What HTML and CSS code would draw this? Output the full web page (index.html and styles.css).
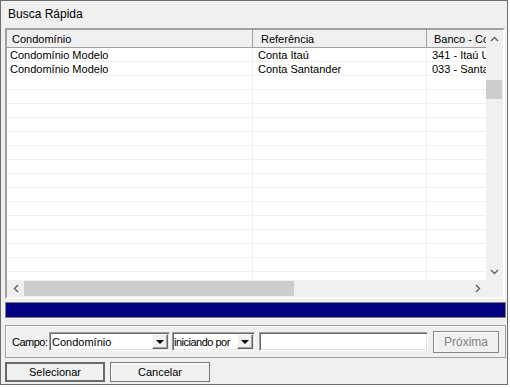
FILE: index.html
```html
<!DOCTYPE html>
<html lang="pt-BR">
<head>
    <meta charset="UTF-8">
    <title>Busca Rápida</title>
    <link rel="stylesheet" href="styles.css">
</head>
<body>
    <div class="dialog">
        <div class="title">Busca Rápida</div>

        <div class="grid">
            <div class="grid-main">
                <div class="grid-body">
                    <div class="head-row">
                        <div class="hcell c1">Condomínio</div>
                        <div class="hcell c2">Referência</div>
                        <div class="hcell c3">Banco - Conta</div>
                    </div>
                    <div class="row">
                        <div class="cell c1">Condomínio Modelo</div>
                        <div class="cell c2">Conta Itaú</div>
                        <div class="cell c3">341 - Itaú Unibanco</div>
                    </div>
                    <div class="row">
                        <div class="cell c1">Condomínio Modelo</div>
                        <div class="cell c2">Conta Santander</div>
                        <div class="cell c3">033 - Santander</div>
                    </div>
                    <div class="row"><div class="cell c1"></div><div class="cell c2"></div><div class="cell c3"></div></div>
                    <div class="row"><div class="cell c1"></div><div class="cell c2"></div><div class="cell c3"></div></div>
                    <div class="row"><div class="cell c1"></div><div class="cell c2"></div><div class="cell c3"></div></div>
                    <div class="row"><div class="cell c1"></div><div class="cell c2"></div><div class="cell c3"></div></div>
                    <div class="row"><div class="cell c1"></div><div class="cell c2"></div><div class="cell c3"></div></div>
                    <div class="row"><div class="cell c1"></div><div class="cell c2"></div><div class="cell c3"></div></div>
                    <div class="row"><div class="cell c1"></div><div class="cell c2"></div><div class="cell c3"></div></div>
                    <div class="row"><div class="cell c1"></div><div class="cell c2"></div><div class="cell c3"></div></div>
                    <div class="row"><div class="cell c1"></div><div class="cell c2"></div><div class="cell c3"></div></div>
                    <div class="row"><div class="cell c1"></div><div class="cell c2"></div><div class="cell c3"></div></div>
                    <div class="row"><div class="cell c1"></div><div class="cell c2"></div><div class="cell c3"></div></div>
                    <div class="row"><div class="cell c1"></div><div class="cell c2"></div><div class="cell c3"></div></div>
                    <div class="row"><div class="cell c1"></div><div class="cell c2"></div><div class="cell c3"></div></div>
                    <div class="row"><div class="cell c1"></div><div class="cell c2"></div><div class="cell c3"></div></div>
                    <div class="row"><div class="cell c1"></div><div class="cell c2"></div><div class="cell c3"></div></div>
                </div>
                <div class="vscroll">
                    <div class="arrow-v">
                        <svg width="9" height="6" viewBox="0 0 9 6"><polyline points="1,5 4.5,1.5 8,5" fill="none" stroke="#606060" stroke-width="1.4"/></svg>
                    </div>
                    <div class="vthumb"></div>
                    <div class="vtrack"></div>
                    <div class="arrow-v">
                        <svg width="9" height="6" viewBox="0 0 9 6"><polyline points="1,1 4.5,4.5 8,1" fill="none" stroke="#606060" stroke-width="1.4"/></svg>
                    </div>
                </div>
            </div>
            <div class="hscroll-row">
                <div class="hscroll">
                    <div class="arrow-h">
                        <svg width="6" height="9" viewBox="0 0 6 9"><polyline points="5,1 1.5,4.5 5,8" fill="none" stroke="#606060" stroke-width="1.4"/></svg>
                    </div>
                    <div class="hthumb"></div>
                    <div class="htrack"></div>
                    <div class="arrow-h">
                        <svg width="6" height="9" viewBox="0 0 6 9"><polyline points="1,1 4.5,4.5 1,8" fill="none" stroke="#606060" stroke-width="1.4"/></svg>
                    </div>
                </div>
                <div class="corner"></div>
            </div>
        </div>

        <div class="progress"></div>

        <div class="search">
            <span class="label">Campo:</span>
            <div class="combo combo-field">
                <span class="combo-text">Condomínio</span>
                <span class="drop"><span class="tri"></span></span>
            </div>
            <div class="combo combo-mode">
                <span class="combo-text">iniciando por</span>
                <span class="drop"><span class="tri"></span></span>
            </div>
            <div class="text-input"></div>
            <button class="btn btn-next" disabled>Próxima</button>
        </div>

        <div class="actions">
            <button class="btn btn-default">Selecionar</button>
            <button class="btn">Cancelar</button>
        </div>
    </div>
</body>
</html>
```

FILE: styles.css
```css
body {
    margin: 0;
    background: #fff;
    font-family: "Liberation Sans", Arial, sans-serif;
    font-size: 11px;
    color: #000;
}
.dialog {
    width: 506px;
    height: 383px;
    border: 1px solid #6d6d6d;
    background: #f0f0f0;
    display: flex;
    flex-direction: column;
}
.title {
    height: 27px;
    padding-left: 7px;
    font-size: 12px;
    line-height: 26px;
}

/* grid */
.grid {
    margin-left: 4px;
    width: 496px;
    border: 2px solid;
    border-color: #a0a0a0 #fff #fff #a0a0a0;
    box-shadow: inset 1px 1px #696969;
    display: flex;
    flex-direction: column;
}
.grid-main {
    display: flex;
    height: 250px;
}
.grid-body {
    width: 479px;
    height: 250px;
    overflow: hidden;
    background: #fff;
}
.head-row {
    display: flex;
    height: 17px;
    border-bottom: 1px solid #a0a0a0;
    background: #f0f0f0;
}
.hcell {
    box-sizing: border-box;
    height: 17px;
    line-height: 18px;
    border-right: 1px solid #a0a0a0;
    white-space: nowrap;
    overflow-x: clip;
}
.row {
    display: flex;
    height: 13px;
    border-bottom: 1px solid #f0f0f0;
}
.cell {
    box-sizing: border-box;
    height: 13px;
    line-height: 15px;
    border-right: 1px solid #f0f0f0;
    white-space: nowrap;
    overflow-x: clip;
}
.c1 { flex: none; width: 246px; }
.c2 { flex: none; width: 174px; }
.c3 { flex: 1; min-width: 0; border-right: none; }
.hcell.c1 { padding-left: 5px; }
.hcell.c2 { padding-left: 8px; }
.hcell.c3 { padding-left: 7px; }
.cell.c1 { padding-left: 3px; }
.cell.c2 { padding-left: 5px; }
.cell.c3 { padding-left: 5px; }

.vscroll {
    width: 17px;
    display: flex;
    flex-direction: column;
    background: #f0f0f0;
}
.arrow-v {
    height: 17px;
    display: flex;
    align-items: center;
    justify-content: center;
}
.vthumb {
    margin: 33px 1px 0 0;
    height: 19px;
    background: #cdcdcd;
}
.vtrack { flex: 1; }
.hscroll-row {
    display: flex;
    height: 17px;
}
.hscroll {
    width: 479px;
    display: flex;
    align-items: center;
    background: #f0f0f0;
}
.arrow-h {
    width: 17px;
    height: 17px;
    display: flex;
    align-items: center;
    justify-content: center;
}
.hthumb {
    width: 270px;
    height: 15px;
    background: #cdcdcd;
}
.htrack { flex: 1; }
.corner {
    flex: 1;
    background: #f0f0f0;
}

.progress {
    margin: 3px 0 0 4px;
    width: 499px;
    height: 14px;
    border: 1px solid #808080;
    background: #000080;
}

/* search panel */
.search {
    margin: 7px 0 0 4px;
    width: 499px;
    height: 31px;
    border: 1px solid #a0a0a0;
    box-shadow: inset 1px 1px #fff;
    display: flex;
    align-items: center;
}
.label {
    width: 37px;
    padding-left: 6px;
    white-space: nowrap;
    letter-spacing: -0.5px;
}
.combo, .text-input {
    box-sizing: border-box;
    height: 19px;
    border: 1px solid;
    border-color: #a0a0a0 #fff #fff #a0a0a0;
    box-shadow: inset 1px 1px #696969, inset -1px -1px #e3e3e3;
    background: #fff;
}
.combo {
    display: flex;
    align-items: center;
}
.combo-text {
    flex: 1;
    min-width: 0;
    padding-left: 2px;
    white-space: nowrap;
    overflow: hidden;
}
.combo-mode .combo-text {
    padding-left: 1px;
    letter-spacing: -0.5px;
}
.combo-field { width: 121px; }
.combo-mode { width: 83px; margin-left: 2px; }
.drop {
    box-sizing: border-box;
    width: 16px;
    height: 15px;
    margin-right: 1px;
    flex-shrink: 0;
    background: #f0f0f0;
    border: 1px solid;
    border-color: #fff #696969 #696969 #fff;
    box-shadow: inset -1px -1px #a0a0a0;
    display: flex;
    align-items: center;
    justify-content: center;
}
.tri {
    width: 0;
    height: 0;
    border-left: 4px solid transparent;
    border-right: 4px solid transparent;
    border-top: 4px solid #000;
    margin-top: 1px;
}
.text-input {
    width: 169px;
    margin-left: 4px;
}

.btn {
    box-sizing: border-box;
    height: 20px;
    width: 100px;
    padding: 0;
    font-family: "Liberation Sans", Arial, sans-serif;
    font-size: 11px;
    color: #000;
    background: #f0f0f0;
    border: 1px solid #7a7a7a;
    box-shadow: inset 1px 1px #fff;
}
.btn-next {
    width: 66px;
    height: 22px;
    margin-left: 5px;
    color: #838383;
    border-color: #868686;
    font-size: 12px;
}
.btn-default {
    border: 2px solid #6a6a6a;
    box-shadow: none;
}
.actions {
    margin: 4px 0 0 4px;
    display: flex;
    gap: 5px;
}
```
